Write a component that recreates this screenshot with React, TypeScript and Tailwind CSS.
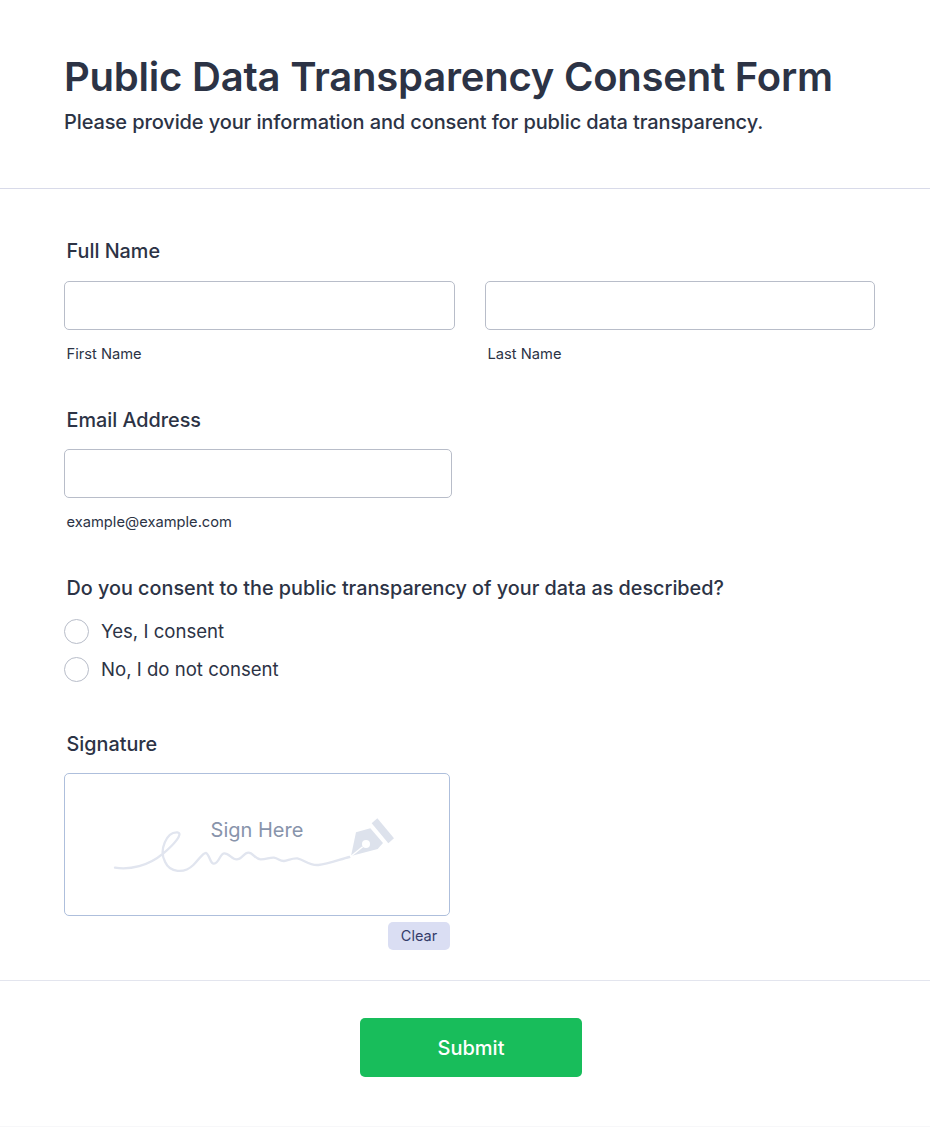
import React from 'react';

const SubLabel = ({ children }: { children: React.ReactNode }) => (
  <div className="mt-[15px] pl-[2.5px] h-[18px] text-[14.7px] leading-[18px] text-[#2c3345]">{children}</div>
);

const FieldLabel = ({ children }: { children: React.ReactNode }) => (
  <div className="pl-[2.5px] h-[24px] text-[19.8px] leading-[24px] text-[#2c3345] [font-weight:450]">{children}</div>
);

const TextBox = ({ className }: { className: string }) => (
  <input type="text" className={`block h-[49px] rounded-[5px] border border-[#b8bdc9] bg-white ${className}`} />
);

const Radio = ({ label }: { label: string }) => (
  <label className="flex items-center h-[25px] gap-3 text-[18.6px] leading-[23px] text-[#2c3345]">
    <span className="w-[25px] h-[25px] rounded-full border border-[#b8bdc9] bg-white" />
    <span className="-mt-px">{label}</span>
  </label>
);

const App = () => {
  return (
    <div className="w-[930px] h-[1127px] bg-white overflow-hidden border-b border-[#f7f7f9] font-['Inter',sans-serif] text-[#2c3345]">
      {/* Header */}
      <header className="h-[189px] pl-[64px] pt-[52px] border-b border-[#d8dae9]">
        <h1 className="text-[40px] leading-[50px] font-semibold tracking-[-0.22px]">Public Data Transparency Consent Form</h1>
        <p className="mt-[1px] text-[20px] leading-[38px] tracking-[-0.115px] [font-weight:470]">
          Please provide your information and consent for public data transparency.
        </p>
      </header>

      <form className="pl-[64px] pt-[50px]">
        {/* Full name */}
        <FieldLabel>Full Name</FieldLabel>
        <div className="flex gap-[30px] mt-[18px]">
          <div>
            <TextBox className="w-[391px]" />
            <SubLabel>First Name</SubLabel>
          </div>
          <div>
            <TextBox className="w-[390px]" />
            <SubLabel>Last Name</SubLabel>
          </div>
        </div>

        {/* Email */}
        <div className="mt-[45px]">
          <FieldLabel>Email Address</FieldLabel>
          <TextBox className="w-[388px] mt-[17px]" />
          <SubLabel>example@example.com</SubLabel>
        </div>

        {/* Consent */}
        <div className="mt-[45px]">
          <FieldLabel>Do you consent to the public transparency of your data as described?</FieldLabel>
          <div className="mt-[19px] flex flex-col gap-[13px]">
            <Radio label="Yes, I consent" />
            <Radio label="No, I do not consent" />
          </div>
        </div>

        {/* Signature */}
        <div className="mt-[50px] w-[386px]">
          <FieldLabel>Signature</FieldLabel>
          <div className="relative mt-[17px] h-[143px] rounded-[5px] border border-[#aebfdc] bg-white flex justify-center pt-[42px]">
            <svg className="absolute -left-px -top-px w-[386px] h-[143px]" viewBox="12 9 1158 429" fill="none">
              <path
                d="M165 293C210 300 265 288 310 250C340 225 372 190 352 187C320 185 296 240 315 275C330 308 372 312 400 285C418 268 428 248 438 249C450 255 450 283 462 281C478 279 480 250 493 250C508 250 515 268 530 268C545 268 552 248 565 248C580 248 585 268 602 268C620 268 628 262 642 263C655 265 660 274 672 273C685 271 695 264 712 265C735 270 745 287 775 285C805 282 840 268 868 261"
                stroke="#e1e5ef"
                strokeWidth="7"
                strokeLinecap="round"
              />
              <path d="M873 258L888 187L931 175L969 219L953 237Z" fill="#dde2ec" />
              <path d="M935 160L952 145L1002 205L985 220Z" fill="#dde2ec" />
              <path d="M871 260L908 230" stroke="#ffffff" strokeWidth="4" />
              <circle cx="918" cy="222" r="12" fill="#ffffff" />
            </svg>
            <span className="relative text-[20px] leading-[28px] text-[#8894ab]">Sign Here</span>
          </div>
          <div className="flex justify-end mt-[6px]">
            <button type="button" className="w-[62px] h-[28px] pb-px rounded-[5px] bg-[#dadef3] text-[14.5px] text-[#343c6a]">
              Clear
            </button>
          </div>
        </div>
      </form>

      {/* Footer */}
      <div className="mt-[30px] border-t border-[#e3e5ee] pl-[360px] pt-[37px]">
        <button type="button" className="w-[222px] h-[59px] rounded-[5px] bg-[#18bd5b] text-white text-[20px] font-medium">
          Submit
        </button>
      </div>
    </div>
  );
};

export default App;
